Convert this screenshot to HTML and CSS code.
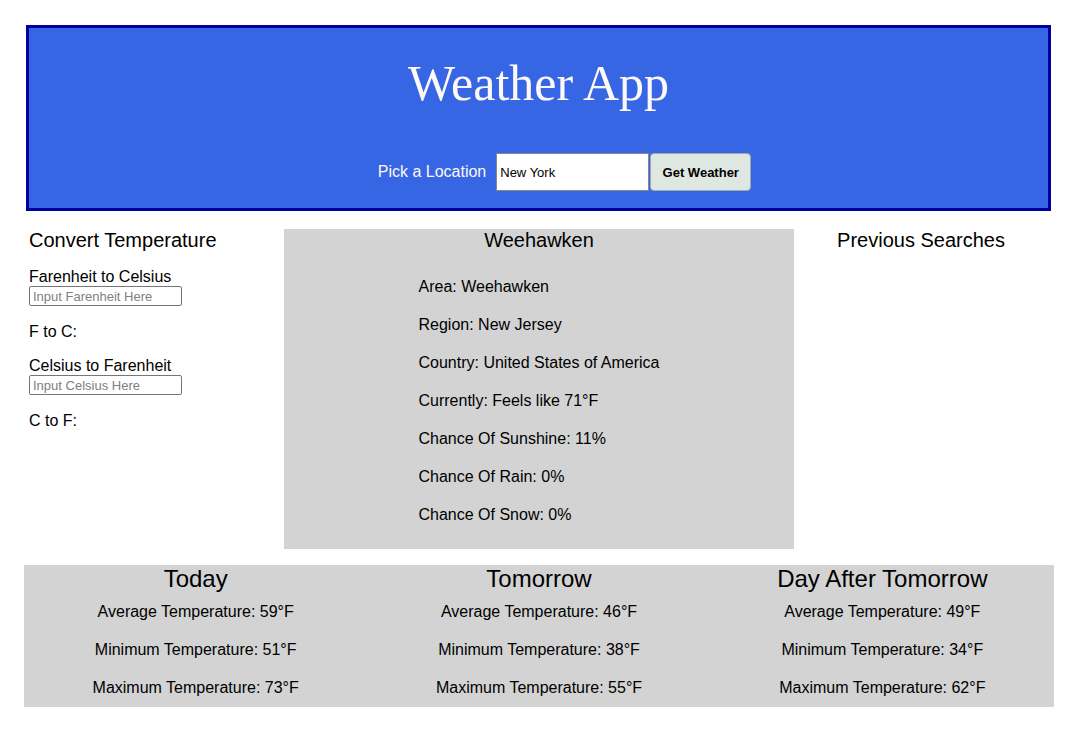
FILE: index.html
```html
<!DOCTYPE html>
<html>
<head>
<meta charset="utf-8">
<link rel="stylesheet" href="styles.css">
</head>
<body>
<header class="header">
  <h1 class="title">Weather App</h1>
  <div class="search-row">
    <label class="search-label" for="loc">Pick a Location</label>
    <input class="search-input" id="loc" type="text" value="New York">
    <button class="search-btn">Get Weather</button>
  </div>
</header>

<main class="middle">
  <section class="convert">
    <h2 class="col-heading">Convert Temperature</h2>
    <div class="conv-label">Farenheit to Celsius</div>
    <input class="conv-input" type="text" placeholder="Input Farenheit Here">
    <p class="conv-result">F to C:</p>
    <div class="conv-label">Celsius to Farenheit</div>
    <input class="conv-input" type="text" placeholder="Input Celsius Here">
    <p class="conv-result">C to F:</p>
  </section>

  <section class="current">
    <h2 class="col-heading center">Weehawken</h2>
    <ul class="details">
      <li>Area: Weehawken</li>
      <li>Region: New Jersey</li>
      <li>Country: United States of America</li>
      <li>Currently: Feels like 71°F</li>
      <li>Chance Of Sunshine: 11%</li>
      <li>Chance Of Rain: 0%</li>
      <li>Chance Of Snow: 0%</li>
    </ul>
  </section>

  <section class="history">
    <h2 class="col-heading center">Previous Searches</h2>
  </section>
</main>

<section class="forecast">
  <div class="day">
    <h3 class="day-title">Today</h3>
    <p class="day-line">Average Temperature: 59°F</p>
    <p class="day-line">Minimum Temperature: 51°F</p>
    <p class="day-line">Maximum Temperature: 73°F</p>
  </div>
  <div class="day">
    <h3 class="day-title">Tomorrow</h3>
    <p class="day-line">Average Temperature: 46°F</p>
    <p class="day-line">Minimum Temperature: 38°F</p>
    <p class="day-line">Maximum Temperature: 55°F</p>
  </div>
  <div class="day">
    <h3 class="day-title">Day After Tomorrow</h3>
    <p class="day-line">Average Temperature: 49°F</p>
    <p class="day-line">Minimum Temperature: 34°F</p>
    <p class="day-line">Maximum Temperature: 62°F</p>
  </div>
</section>
</body>
</html>
```
FILE: styles.css
```css
* { box-sizing: border-box; }

body {
  margin: 0;
  padding-top: 25px;
  font-family: "Liberation Sans", Arial, sans-serif;
  color: #000;
  background: #fff;
}

.header {
  width: 1025px;
  margin: 0 0 0 26px;
  height: 186px;
  background: #3766e5;
  border: 3px solid #00009b;
  padding-top: 26px;
}

.title {
  margin: 0;
  font-family: "Liberation Serif", "Times New Roman", serif;
  font-weight: normal;
  font-size: 50px;
  line-height: 58px;
  color: #fdf8f6;
  text-align: center;
}

.search-row {
  margin-top: 41px;
  padding-left: 52px;
  display: flex;
  justify-content: center;
  align-items: center;
}

.search-label {
  color: #fdf8f6;
  font-size: 16px;
  margin-right: 10px;
}

.search-input {
  width: 153px;
  height: 38px;
  border: 1px solid #888;
  padding: 0 3px;
  font-family: "Liberation Sans", Arial, sans-serif;
  font-size: 13px;
  color: #000;
  background: #fff;
}

.search-btn {
  width: 101px;
  height: 38px;
  margin-left: 1px;
  background: #dfe7e3;
  border: 1px solid #9fa9a6;
  border-radius: 4px;
  font-family: "Liberation Sans", Arial, sans-serif;
  font-weight: bold;
  font-size: 13px;
  color: #000;
}

.middle {
  margin: 18px 0 0 24px;
  width: 1030px;
  display: grid;
  grid-template-columns: 260px 510px 254px;
}

.col-heading {
  margin: 0;
  font-size: 20px;
  font-weight: normal;
  line-height: 23px;
}

.center { text-align: center; }

.convert {
  padding-left: 5px;
}

.conv-label {
  margin-top: 16px;
  font-size: 16px;
  line-height: 18px;
}

.conv-input {
  display: block;
  width: 153px;
  height: 20px;
  margin-left: 0;
  border: 1px solid #767676;
  border-radius: 2px;
  padding: 0 3px;
  font-family: "Liberation Sans", Arial, sans-serif;
  font-size: 13px;
}

.conv-input::placeholder { color: #808080; }

.conv-result {
  margin: 17px 0 0;
  font-size: 16px;
  line-height: 18px;
}

.conv-result + .conv-label { margin-top: 16px; }

.current {
  background: #d3d3d3;
  height: 320px;
}

.details {
  list-style: none;
  margin: 0 auto;
  padding: 24px 0 0;
  width: fit-content;
  display: flex;
  flex-direction: column;
  gap: 16px;
}

.details li {
  font-size: 16px;
  line-height: 22px;
}

.forecast {
  margin: 16px 0 0 24px;
  width: 1030px;
  height: 142px;
  background: #d3d3d3;
  display: grid;
  grid-template-columns: repeat(3, 1fr);
}

.day {
  text-align: center;
}

.day-title {
  margin: 0;
  font-size: 24px;
  font-weight: normal;
  line-height: 28px;
}

.day-line {
  margin: 8px 0 16px;
  font-size: 16px;
  line-height: 22px;
}

.day-line + .day-line { margin-top: 0; }
```
